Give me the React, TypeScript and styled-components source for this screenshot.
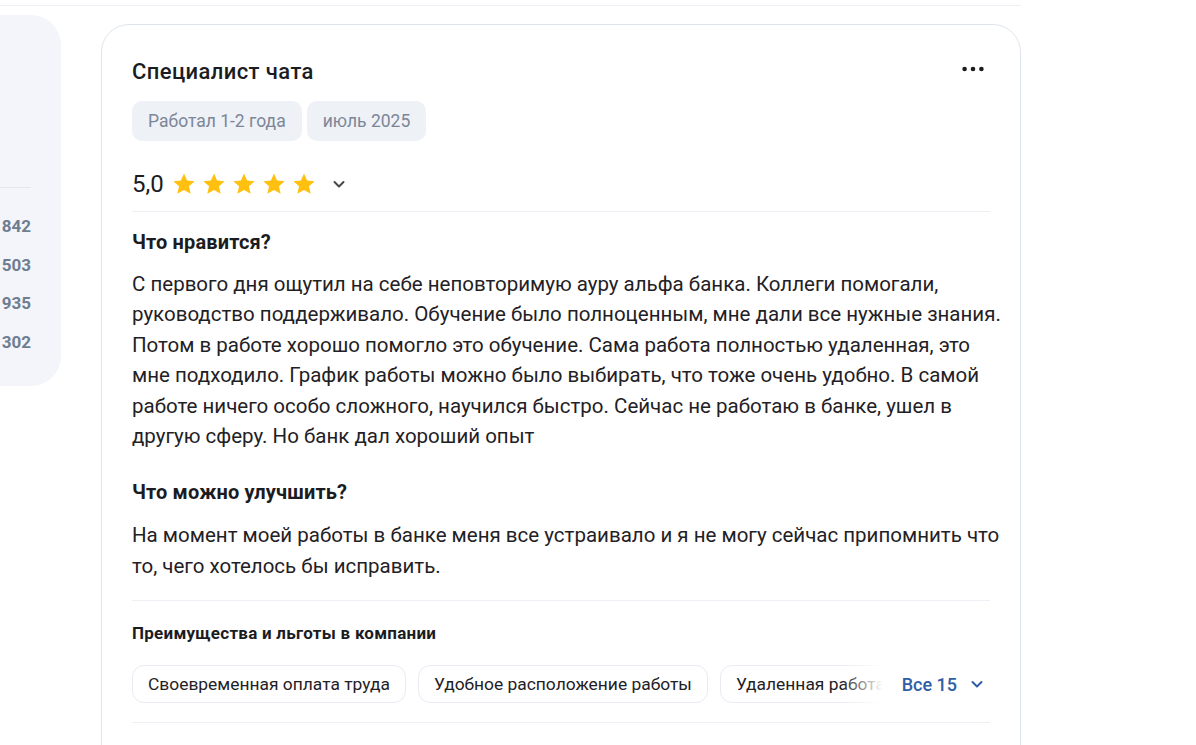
import React from "react";
import styled, { createGlobalStyle } from "styled-components";

const Global = createGlobalStyle`
  html, body { margin: 0; padding: 0; background: #ffffff; }
  body { font-family: Roboto, "Noto Sans", Arial, sans-serif; color: #1f2125; -webkit-font-smoothing: antialiased; }
  * { box-sizing: border-box; }
`;

const Page = styled.div`
  width: 1196px;
  height: 745px;
  overflow: hidden;
`;

const TopLine = styled.div`
  width: 1021px;
  height: 6px;
  border-bottom: 1px solid #eceff4;
`;

const Row = styled.div`
  display: flex;
  align-items: flex-start;
  gap: 40px;
`;

const SidePanel = styled.aside`
  width: 61px;
  margin-top: 9px;
  height: 371px;
  background: #f3f5fa;
  border-radius: 0 30px 30px 0;
  padding: 172px 30px 0 0;
  display: flex;
  flex-direction: column;
`;

const SideDivider = styled.div`
  height: 1px;
  background: #e3e7ee;
  margin-bottom: 26px;
`;

const SideNum = styled.div`
  text-align: right;
  font-size: 17px;
  font-weight: 700;
  line-height: 24px;
  color: #6f7d91;
  height: 38.7px;
`;

const Card = styled.section`
  margin-top: 18px;
  width: 920px;
  height: 760px;
  border: 1px solid #dfe4ec;
  border-radius: 28px;
  padding: 33px 30px 0 30px;
`;

const TitleRow = styled.div`
  display: flex;
  justify-content: space-between;
  align-items: center;
  height: 28px;
`;

const Title = styled.h2`
  margin: 0;
  font-size: 22px;
  font-weight: 500;
  letter-spacing: 0.4px;
  line-height: 28px;
  color: #1b1c1f;
`;

const DotsButton = styled.button`
  border: 0;
  background: none;
  padding: 0;
  width: 22px;
  height: 20px;
  margin-top: -6px;
  margin-right: 6px;
  display: flex;
  align-items: center;
  justify-content: center;
  cursor: pointer;
`;

const Tags = styled.div`
  display: flex;
  gap: 5px;
  margin-top: 15px;
`;

const Tag = styled.span`
  height: 40px;
  padding: 0 16px;
  display: inline-flex;
  align-items: center;
  border-radius: 10px;
  background: #eef1f6;
  color: #7c8698;
  font-size: 17.5px;
`;

const RatingRow = styled.div`
  display: flex;
  align-items: center;
  margin-top: 29px;
  height: 28px;
`;

const Score = styled.span`
  font-size: 24px;
  font-weight: 400;
  color: #1b1c1f;
  margin-right: 8px;
`;

const Stars = styled.div`
  display: flex;
  gap: 6px;
`;

const ChevronBtn = styled.button`
  border: 0;
  background: none;
  padding: 0;
  margin-left: 13px;
  width: 20px;
  height: 20px;
  display: flex;
  align-items: center;
  justify-content: center;
`;

const Divider = styled.div<{ $mt: number }>`
  height: 1px;
  background: #eceff3;
  margin-top: ${(p) => p.$mt}px;
`;

const Heading = styled.h3<{ $mt: number }>`
  margin: ${(p) => p.$mt}px 0 0 0;
  font-size: 20px;
  font-weight: 700;
  letter-spacing: 0.15px;
  line-height: 24px;
  color: #1b1c1f;
`;

const Paragraph = styled.p<{ $mt: number }>`
  margin: ${(p) => p.$mt}px 0 0 0;
  font-size: 20.5px;
  line-height: 30.4px;
  color: #1f2125;
`;

const Line = styled.span`
  display: block;
  white-space: nowrap;
`;

const SmallHeading = styled.h4`
  margin: 21px 0 0 0;
  font-size: 17px;
  font-weight: 700;
  letter-spacing: 0.25px;
  line-height: 22px;
  color: #1b1c1f;
`;

const BenefitsRow = styled.div`
  display: flex;
  align-items: center;
  margin-top: 21px;
  height: 38px;
`;

const ChipsViewport = styled.div`
  position: relative;
  flex: 1;
  overflow: hidden;
  display: flex;
  gap: 12px;
  height: 38px;
`;

const Fade = styled.div`
  position: absolute;
  right: 0;
  top: 0;
  bottom: 0;
  width: 45px;
  background: linear-gradient(to right, rgba(255, 255, 255, 0), #ffffff 90%);
`;

const Chip = styled.span`
  flex: none;
  height: 38px;
  padding: 0 15px;
  display: inline-flex;
  align-items: center;
  border: 1px solid #e8ebf2;
  border-radius: 12px;
  font-size: 17.4px;
  color: #1f2125;
  white-space: nowrap;
`;

const AllButton = styled.button`
  border: 0;
  background: none;
  padding: 0 6px 0 15px;
  display: flex;
  align-items: center;
  gap: 13px;
  font-family: inherit;
  font-size: 18px;
  font-weight: 500;
  color: #2f5ea6;
  white-space: nowrap;
  cursor: pointer;
`;

const Star = () => (
  <svg width="24" height="24" viewBox="0 0 24 24">
    <path
      d="M12 1.6l3.1 7 7.6.7-5.75 5.05 1.73 7.45L12 17.9 5.32 21.8l1.73-7.45L1.3 9.3l7.6-.7z"
      fill="#ffc010"
    />
  </svg>
);

const Chevron = ({ color, size = 14 }: { color: string; size?: number }) => (
  <svg width={size} height={size} viewBox="0 0 14 14">
    <path d="M2.5 5l4.5 4.5L11.5 5" fill="none" stroke={color} strokeWidth="2" strokeLinecap="round" strokeLinejoin="round" />
  </svg>
);

const Dots = () => (
  <svg width="22" height="6" viewBox="0 0 22 6">
    <circle cx="2.6" cy="3" r="2.3" fill="#1c1c1e" />
    <circle cx="11" cy="3" r="2.3" fill="#1c1c1e" />
    <circle cx="19.4" cy="3" r="2.3" fill="#1c1c1e" />
  </svg>
);

const sideNums = ["842", "503", "935", "302"];
const chips = ["Своевременная оплата труда", "Удобное расположение работы", "Удаленная работа", "Гибкий график"];

const likes = [
  "С первого дня ощутил на себе неповторимую ауру альфа банка. Коллеги помогали,",
  "руководство поддерживало. Обучение было полноценным, мне дали все нужные знания.",
  "Потом в работе хорошо помогло это обучение. Сама работа полностью удаленная, это",
  "мне подходило. График работы можно было выбирать, что тоже очень удобно. В самой",
  "работе ничего особо сложного, научился быстро. Сейчас не работаю в банке, ушел в",
  "другую сферу. Но банк дал хороший опыт",
];

const improve = [
  "На момент моей работы в банке меня все устраивало и я не могу сейчас припомнить что",
  "то, чего хотелось бы исправить.",
];

export default function App() {
  return (
    <Page>
      <Global />
      <TopLine />
      <Row>
        <SidePanel>
          <SideDivider />
          {sideNums.map((n) => (
            <SideNum key={n}>{n}</SideNum>
          ))}
        </SidePanel>
        <Card>
          <TitleRow>
            <Title>Специалист чата</Title>
            <DotsButton aria-label="Ещё">
              <Dots />
            </DotsButton>
          </TitleRow>
          <Tags>
            <Tag>Работал 1-2 года</Tag>
            <Tag>июль 2025</Tag>
          </Tags>
          <RatingRow>
            <Score>5,0</Score>
            <Stars>
              {[0, 1, 2, 3, 4].map((i) => (
                <Star key={i} />
              ))}
            </Stars>
            <ChevronBtn aria-label="Подробнее">
              <Chevron color="#45474d" />
            </ChevronBtn>
          </RatingRow>
          <Divider $mt={13} />
          <Heading $mt={18}>Что нравится?</Heading>
          <Paragraph $mt={15}>
            {likes.map((l) => (
              <Line key={l}>{l}</Line>
            ))}
          </Paragraph>
          <Heading $mt={29}>Что можно улучшить?</Heading>
          <Paragraph $mt={16}>
            {improve.map((l) => (
              <Line key={l}>{l}</Line>
            ))}
          </Paragraph>
          <Divider $mt={19} />
          <SmallHeading>Преимущества и льготы в компании</SmallHeading>
          <BenefitsRow>
            <ChipsViewport>
              {chips.map((c) => (
                <Chip key={c}>{c}</Chip>
              ))}
              <Fade />
            </ChipsViewport>
            <AllButton>
              Все 15
              <Chevron color="#2f5ea6" />
            </AllButton>
          </BenefitsRow>
          <Divider $mt={19} />
        </Card>
      </Row>
    </Page>
  );
}
